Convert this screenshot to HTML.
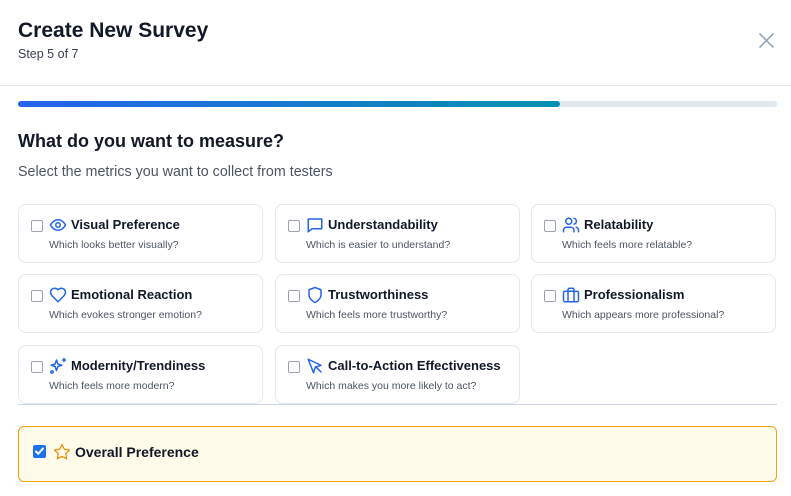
<!DOCTYPE html>
<html><head><style>
*{margin:0;padding:0;box-sizing:border-box}
body{width:791px;height:496px;background:#fff;font-family:"Liberation Sans",Arial,sans-serif;position:relative;overflow:hidden;color:#111827}
.a{position:absolute}
.card{position:absolute;width:245px;height:59px;border:1px solid #e2e8f0;border-radius:8px;background:#fff}
.cb{position:absolute;left:12px;top:15px;width:12px;height:12px;border:1px solid #9ca3af;border-radius:2px;background:#fff}
.ic{position:absolute;left:30px;top:11px;width:18px;height:18px}
.t{position:absolute;left:52px;top:12px;font-size:13px;font-weight:bold;color:#111827;white-space:nowrap}
.s{position:absolute;left:30px;top:34px;font-size:10.5px;color:#4b5563;white-space:nowrap}
svg{fill:none;stroke:#2563eb;stroke-width:2;stroke-linecap:round;stroke-linejoin:round}
</style></head><body>
<div class="a" style="left:18px;top:19px;font-size:21px;font-weight:bold;color:#111827">Create New Survey</div>
<div class="a" style="left:18px;top:47px;font-size:12.5px;color:#374151">Step 5 of 7</div>
<svg class="a" style="left:759px;top:33px;stroke:#94a3b8;stroke-width:1.6" width="15" height="15" viewBox="0 0 15 15"><path d="M1 1L14 14M14 1L1 14"/></svg>
<div class="a" style="left:0;top:85px;width:791px;height:1px;background:#e5e7eb"></div>
<div class="a" style="left:18px;top:101px;width:759px;height:6px;border-radius:3px;background:#e2e8f0"></div>
<div class="a" style="left:18px;top:101px;width:542px;height:6px;border-radius:3px;background:linear-gradient(90deg,#2563eb,#0891b2)"></div>
<div class="a" style="left:18px;top:131px;font-size:18px;font-weight:bold;color:#111827">What do you want to measure?</div>
<div class="a" style="left:18px;top:164px;font-size:14.3px;color:#4b5563">Select the metrics you want to collect from testers</div>

<div class="a" style="left:0;top:190px;width:791px;height:214px;overflow:hidden">
<div class="card" style="left:18px;top:14px"><div class="cb"></div>
<svg class="ic" viewBox="0 0 24 24"><path d="M2 12s3.5-7 10-7 10 7 10 7-3.5 7-10 7S2 12 2 12z"/><circle cx="12" cy="12" r="3"/></svg>
<div class="t">Visual Preference</div><div class="s">Which looks better visually?</div></div>
<div class="card" style="left:275px;top:14px"><div class="cb"></div>
<svg class="ic" viewBox="0 0 24 24"><path d="M3 4h18v13H8l-5 4z"/></svg>
<div class="t">Understandability</div><div class="s">Which is easier to understand?</div></div>
<div class="card" style="left:531px;top:14px"><div class="cb"></div>
<svg class="ic" viewBox="0 0 24 24"><circle cx="9" cy="7" r="4"/><path d="M2 21v-2a4 4 0 0 1 4-4h6a4 4 0 0 1 4 4v2M16 3.1a4 4 0 0 1 0 7.8M22 21v-2a4 4 0 0 0-3-3.9"/></svg>
<div class="t">Relatability</div><div class="s">Which feels more relatable?</div></div>

<div class="card" style="left:18px;top:84px"><div class="cb"></div>
<svg class="ic" viewBox="0 0 24 24"><path d="M19 14c1.5-1.5 3-3.2 3-5.5A5.5 5.5 0 0 0 16.5 3c-1.8 0-3 .5-4.5 2-1.5-1.5-2.7-2-4.5-2A5.5 5.5 0 0 0 2 8.5c0 2.3 1.5 4 3 5.5l7 7z"/></svg>
<div class="t">Emotional Reaction</div><div class="s">Which evokes stronger emotion?</div></div>
<div class="card" style="left:275px;top:84px"><div class="cb"></div>
<svg class="ic" viewBox="0 0 24 24"><path d="M12 22s8-4 8-10V5l-8-3-8 3v7c0 6 8 10 8 10z"/></svg>
<div class="t">Trustworthiness</div><div class="s">Which feels more trustworthy?</div></div>
<div class="card" style="left:531px;top:84px"><div class="cb"></div>
<svg class="ic" viewBox="0 0 24 24"><rect x="2" y="7" width="20" height="14" rx="2"/><path d="M16 21V5a2 2 0 0 0-2-2h-4a2 2 0 0 0-2 2v16"/></svg>
<div class="t">Professionalism</div><div class="s">Which appears more professional?</div></div>

<div class="card" style="left:18px;top:155px"><div class="cb"></div>
<svg class="ic" viewBox="0 0 24 24"><path d="M10 4l1.8 5.2L17 11l-5.2 1.8L10 18l-1.8-5.2L3 11l5.2-1.8z"/><path d="M20 2v4M22 4h-4"/><circle cx="4" cy="20" r="1.5"/></svg>
<div class="t">Modernity/Trendiness</div><div class="s">Which feels more modern?</div></div>
<div class="card" style="left:275px;top:155px"><div class="cb"></div>
<svg class="ic" viewBox="0 0 24 24"><path d="M3 3l7 18 2.5-7.5L20 11z"/><path d="M13 13l7 7"/></svg>
<div class="t">Call-to-Action Effectiveness</div><div class="s">Which makes you more likely to act?</div></div>
</div>
<div class="a" style="left:18px;top:404px;width:759px;height:1px;background:#cbd5e1"></div>

<div class="a" style="left:18px;top:426px;width:759px;height:56px;border:1px solid #f59e0b;border-radius:6px;background:#fefbea"></div>
<div class="a" style="left:33px;top:445px;width:13px;height:13px;border-radius:2px;background:#1a73e8"></div>
<svg class="a" style="left:35px;top:447px;stroke:#fff;stroke-width:2" width="9" height="9" viewBox="0 0 9 9"><path d="M1 4.5l2.3 2.3L8 1.5"/></svg>
<svg class="a" style="left:53px;top:443px;stroke:#f08a00;stroke-width:1.6" width="18" height="18" viewBox="0 0 24 24"><path d="M12 2l3.1 6.3 6.9 1-5 4.9 1.2 6.9L12 17.8l-6.2 3.3L7 14.2 2 9.3l6.9-1z"/></svg>
<div class="a" style="left:75px;top:444px;font-size:14px;font-weight:bold;color:#111827">Overall Preference</div>
</body></html>
